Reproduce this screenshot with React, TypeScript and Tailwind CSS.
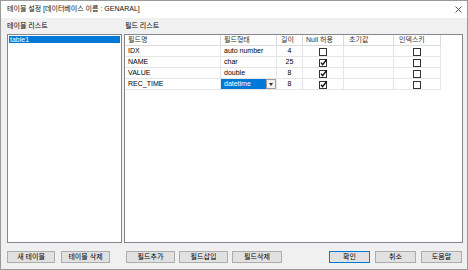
import React from "react";

type Field = {
  name: string;
  type: string;
  len: string;
  nullable: boolean;
  index: boolean;
  editing?: boolean;
};

const FIELDS: Field[] = [
  { name: "IDX", type: "auto number", len: "4", nullable: false, index: false },
  { name: "NAME", type: "char", len: "25", nullable: true, index: false },
  { name: "VALUE", type: "double", len: "8", nullable: true, index: false },
  { name: "REC_TIME", type: "datetime", len: "8", nullable: true, index: false, editing: true },
];

function Check({ checked }: { checked: boolean }) {
  return (
    <svg width="9" height="9" viewBox="0 0 9 9" className="block">
      <rect x="0.5" y="1.5" width="7" height="7" fill="#fff" stroke="#333" strokeWidth="1" />
      {checked && (
        <path d="M2 4.6 L3.6 6.6 L7.8 1.2" fill="none" stroke="#111" strokeWidth="1.4" />
      )}
    </svg>
  );
}

function Btn({ label, w, primary }: { label: string; w: string; primary?: boolean }) {
  return (
    <div
      className={`${w} h-[12px] flex items-center justify-center bg-[#e1e1e1] border text-[7px] text-black ${
        primary ? "border-[#0078d7]" : "border-[#adadad]"
      }`}
    >
      {label}
    </div>
  );
}

export default function App() {
  return (
    <div className="w-[468px] h-[270px] border border-[#9a9a9a] bg-[#f0f0f0] flex flex-col font-['Liberation_Sans','Noto_Sans_CJK_KR',sans-serif] text-[7px] text-black overflow-hidden">
      {/* title bar */}
      <div className="h-[17px] bg-white flex items-center justify-between pl-[6px] pr-[5px] shrink-0">
        <span className="text-[7px] text-[#111]">테이블 설정 [데이터베이스 이름 : GENARAL]</span>
        <svg width="7" height="7" viewBox="0 0 7 7">
          <path d="M0.5 0.5 L6.5 6.5 M6.5 0.5 L0.5 6.5" stroke="#444" strokeWidth="0.9" />
        </svg>
      </div>

      <div className="flex-1 flex flex-col pl-[6px] pr-[4px]">
        {/* labels */}
        <div className="flex mt-[3px] h-[10px] items-center">
          <div className="w-[117px]">테이블 리스트</div>
          <div className="pl-[1px]">필드 리스트</div>
        </div>

        {/* panels */}
        <div className="flex gap-[2px] h-[209px] mt-[3px]">
          <div className="w-[115px] border border-[#828790] bg-white p-[1px]">
            <div className="h-[7px] leading-[7px] bg-[#0078d7] text-white pl-[1px]">table1</div>
          </div>

          <div className="flex-1 border border-[#828790] bg-white">
            <div className="flex h-[11px] text-[#333]">
              <div className="w-[96px] border-r border-b border-[#dadada] pl-[3px] leading-[10px]">필드명</div>
              <div className="w-[56px] border-r border-b border-[#dadada] pl-[3px] leading-[10px]">필드형태</div>
              <div className="w-[26px] border-r border-b border-[#dadada] pl-[4px] leading-[10px]">길이</div>
              <div className="w-[41px] border-r border-b border-[#dadada] pl-[3px] leading-[10px]">Null 허용</div>
              <div className="w-[50px] border-r border-b border-[#dadada] pl-[5px] leading-[10px]">초기값</div>
              <div className="w-[47px] border-r border-b border-[#dadada] pl-[5px] leading-[10px]">인덱스키</div>
            </div>
            {FIELDS.map((f) => (
              <div key={f.name} className="flex h-[11px]">
                <div className="w-[96px] border-r border-b border-[#e6e6e6] pl-[3px] leading-[10px]">{f.name}</div>
                <div className="w-[56px] border-r border-b border-[#e6e6e6] leading-[10px]">
                  {f.editing ? (
                    <div className="flex h-full">
                      <div className="flex-1 bg-[#0078d7] text-white pl-[3px] leading-[10px]">{f.type}</div>
                      <div className="w-[10px] bg-[#f0f0f0] border border-[#a0a0a0] flex items-center justify-center">
                        <svg width="4" height="3" viewBox="0 0 4 3">
                          <path d="M0 0 L4 0 L2 3 Z" fill="#333" />
                        </svg>
                      </div>
                    </div>
                  ) : (
                    <div className="pl-[3px]">{f.type}</div>
                  )}
                </div>
                <div className="w-[26px] border-r border-b border-[#e6e6e6] text-center leading-[10px]">{f.len}</div>
                <div className="w-[41px] border-r border-b border-[#e6e6e6] flex items-center justify-center">
                  <Check checked={f.nullable} />
                </div>
                <div className="w-[50px] border-r border-b border-[#e6e6e6]" />
                <div className="w-[47px] border-r border-b border-[#e6e6e6] flex items-center justify-center">
                  <Check checked={f.index} />
                </div>
              </div>
            ))}
          </div>
        </div>

        {/* buttons */}
        <div className="flex mt-[8px]">
          <Btn label="새 테이블" w="w-[48px]" />
          <div className="ml-[6px]">
            <Btn label="테이블 삭제" w="w-[49px]" />
          </div>
          <div className="ml-[16px]">
            <Btn label="필드추가" w="w-[49px]" />
          </div>
          <div className="ml-[4px]">
            <Btn label="필드삽입" w="w-[49px]" />
          </div>
          <div className="ml-[4px]">
            <Btn label="필드삭제" w="w-[50px]" />
          </div>
          <div className="ml-auto flex gap-[5px] mr-[1px]">
            <Btn label="확인" w="w-[41px]" primary />
            <Btn label="취소" w="w-[41px]" />
            <Btn label="도움말" w="w-[41px]" />
          </div>
        </div>
      </div>
    </div>
  );
}
